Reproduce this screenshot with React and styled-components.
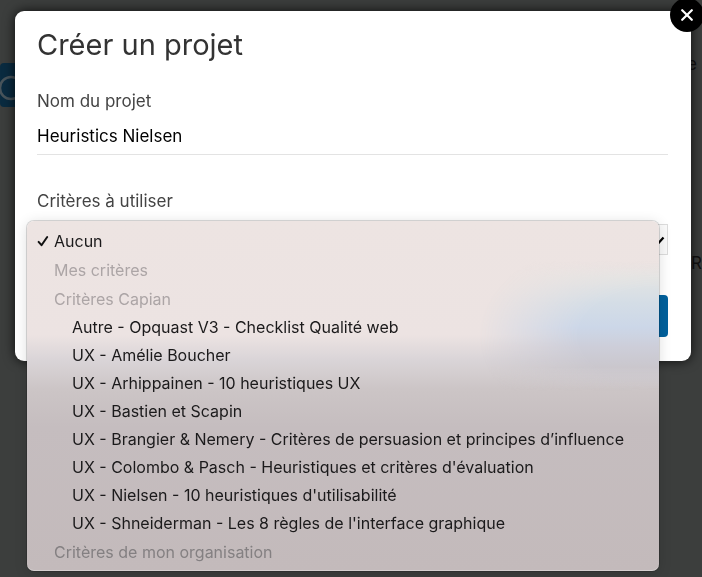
import React, { useState } from 'react';
import styled, { createGlobalStyle } from 'styled-components';

const GlobalStyle = createGlobalStyle`
  * {
    box-sizing: border-box;
  }

  body {
    margin: 0;
    background-color: #3c3e3d;
    font-family: Inter, "Liberation Sans", sans-serif;
    overflow: hidden;
  }
`;

const Page = styled.main`
  min-height: 100vh;
  display: flex;
  justify-content: space-between;
  align-items: flex-start;
  padding-top: 54px;
  font-size: 17px;
  line-height: 20px;
  color: #111111;
`;

const RecordButton = styled.button`
  width: 32px;
  height: 44px;
  margin-top: 9px;
  padding: 0;
  border: none;
  border-radius: 4px;
  background-color: #0a2b40;
  cursor: pointer;

  svg {
    display: block;
  }
`;

const SideNotes = styled.div`
  display: flex;
  flex-direction: column;
  align-items: flex-start;
  gap: 179px;
  width: 15px;
`;

const SideNote = styled.p`
  margin: 0;
  align-self: ${props => props.$align};
`;

const Overlay = styled.div`
  position: fixed;
  inset: 0;
  padding: 11px 11px 0 15px;
`;

const Dialog = styled.section`
  position: relative;
  padding: 16px 23px 24px 22px;
  border-radius: 9px;
  background-color: #ffffff;
  box-shadow: 0 0 12px rgba(0, 0, 0, 0.8);
`;

const DialogTitle = styled.h1`
  margin: 0 0 26px;
  font-size: 29px;
  font-weight: 400;
  line-height: 36px;
  color: #333333;
`;

const CloseButton = styled.button`
  position: absolute;
  top: -13px;
  right: -13px;
  width: 34px;
  height: 34px;
  display: flex;
  align-items: center;
  justify-content: center;
  padding: 0;
  border: none;
  border-radius: 50%;
  background-color: #000000;
  color: #ffffff;
  cursor: pointer;
`;

const Field = styled.div`
  display: flex;
  flex-direction: column;
  margin-bottom: ${props => props.$gap};
`;

const Label = styled.label`
  font-size: 17px;
  line-height: 24px;
  color: #444444;
`;

const TextInput = styled.input`
  width: 100%;
  height: 42px;
  padding: 4px 0 0;
  border: none;
  border-bottom: 1px solid #e3e3e3;
  outline: none;
  font-family: inherit;
  font-size: 17px;
  color: #000000;
`;

const SelectBox = styled.div`
  position: relative;
  margin-top: 11px;
`;

const Chevron = styled.svg`
  position: absolute;
  top: 12px;
  right: 3px;
  pointer-events: none;
`;

const Select = styled.select`
  display: block;
  width: 100%;
  height: 31px;
  padding: 0 24px 0 8px;
  appearance: none;
  border: 1px solid #dcdcdc;
  border-radius: 0;
  background-color: #fafafa;
  font-family: inherit;
  font-size: 16px;
`;

const SubmitButton = styled.button`
  display: block;
  height: 42px;
  margin-left: auto;
  padding: 0 24px;
  border: none;
  border-radius: 4px;
  background-color: #00609c;
  cursor: pointer;
`;

const Menu = styled.div`
  position: absolute;
  top: -3px;
  left: -10px;
  right: 9px;
  z-index: 1;
  padding: 6px 0 5px;
  border-radius: 7px;
  background: linear-gradient(#ede4e2 0, #ece3e2 114px, #dad5d8 138px, #ccc5c6 168px, #c5bdbf 206px, #c3babb 100%);
  box-shadow:
    0 0 0 1px rgba(0, 0, 0, 0.14),
    inset 0 -1px 0 rgba(255, 255, 255, 0.3),
    0 2px 14px rgba(0, 0, 0, 0.14);
  font-size: 16px;
  line-height: 28px;
  color: #1b1a1b;
  white-space: nowrap;

  /* the blue button showing through the frosted menu */
  &::before {
    content: '';
    position: absolute;
    z-index: -1;
    top: 40px;
    right: 0;
    width: 180px;
    height: 130px;
    background: linear-gradient(
      rgba(227, 228, 227, 0) 0,
      #e3e4e3 16px,
      #d4dde6 42px,
      #ccd7e8 66px,
      #cdced9 86px,
      #cac7cd 106px,
      rgba(202, 196, 198, 0) 100%
    );
    mask-image: radial-gradient(ellipse 180px 110px at 100% 75px, #000000 45%, transparent 100%);
  }
`;

const Option = styled.div`
  display: flex;
  align-items: center;
  height: 28px;
  padding-left: ${props => (props.$nested ? '45px' : '10px')};
  cursor: default;
`;

const CheckSlot = styled.span`
  display: flex;
  width: 17px;
`;

const Group = styled.div`
  padding-top: 1px;
`;

const GroupLabel = styled.div`
  height: 28px;
  padding-left: 27px;
  color: ${props => (props.$dim ? '#848082' : '#aca5a6')};
`;

const groups = [
  { label: 'Mes critères', options: [] },
  {
    label: 'Critères Capian',
    options: [
      'Autre - Opquast V3 - Checklist Qualité web',
      'UX - Amélie Boucher',
      'UX - Arhippainen - 10 heuristiques UX',
      'UX - Bastien et Scapin',
      'UX - Brangier & Nemery - Critères de persuasion et principes d’influence',
      "UX - Colombo & Pasch - Heuristiques et critères d'évaluation",
      "UX - Nielsen - 10 heuristiques d'utilisabilité",
      "UX - Shneiderman - Les 8 règles de l'interface graphique",
    ],
  },
  { label: 'Critères de mon organisation', options: [], dim: true },
];

const CriteriaMenu = ({ value, onSelect }) => (
  <Menu role="listbox" aria-label="Critères à utiliser">
    <Option role="option" aria-selected={value === 'Aucun'} onClick={() => onSelect('Aucun')}>
      <CheckSlot>
        {value === 'Aucun' && (
          <svg width="12" height="12" viewBox="0 0 12 12" fill="none">
            <path d="M1.6 6.9 L4.5 10.2 L10.2 2" stroke="#111111" strokeWidth="2" strokeLinecap="round" strokeLinejoin="round" />
          </svg>
        )}
      </CheckSlot>
      Aucun
    </Option>
    {groups.map(group => (
      <Group key={group.label} role="group" aria-label={group.label}>
        <GroupLabel $dim={group.dim}>{group.label}</GroupLabel>
        {group.options.map(option => (
          <Option key={option} $nested role="option" aria-selected={value === option} onClick={() => onSelect(option)}>
            {option}
          </Option>
        ))}
      </Group>
    ))}
  </Menu>
);

const App = () => {
  const [name, setName] = useState('Heuristics Nielsen');
  const [criteria, setCriteria] = useState('Aucun');

  return (
    <>
      <GlobalStyle />
      <Page>
        <RecordButton type="button" aria-label="Capture">
          <svg width="32" height="44" viewBox="0 0 32 44" fill="none">
            <circle cx="11" cy="25" r="11" stroke="#48545b" strokeWidth="2.5" />
          </svg>
        </RecordButton>
        <SideNotes>
          <SideNote $align="flex-start">e</SideNote>
          <SideNote $align="flex-end">R</SideNote>
        </SideNotes>
      </Page>

      <Overlay>
        <Dialog role="dialog" aria-labelledby="dialog-title">
          <CloseButton type="button" aria-label="Fermer">
            <svg width="12" height="12" viewBox="0 0 12 12" fill="none">
              <path d="M1.2 1.2 L10.8 10.8 M10.8 1.2 L1.2 10.8" stroke="currentColor" strokeWidth="2.2" strokeLinecap="round" />
            </svg>
          </CloseButton>

          <DialogTitle id="dialog-title">Créer un projet</DialogTitle>

          <Field $gap="34px">
            <Label htmlFor="project-name">Nom du projet</Label>
            <TextInput id="project-name" value={name} onChange={e => setName(e.target.value)} />
          </Field>

          <Field $gap="40px">
            <Label htmlFor="criteria">Critères à utiliser</Label>
            <SelectBox>
              <Select id="criteria" value={criteria} onChange={e => setCriteria(e.target.value)}>
                <option>Aucun</option>
                {groups.map(group => (
                  <optgroup key={group.label} label={group.label}>
                    {group.options.map(option => (
                      <option key={option}>{option}</option>
                    ))}
                  </optgroup>
                ))}
              </Select>
              <Chevron width="12" height="8" viewBox="0 0 12 8" fill="none">
                <path d="M1.5 1.5 L6 6.5 L10.5 1.5" stroke="#000000" strokeWidth="2.2" />
              </Chevron>
              <CriteriaMenu value={criteria} onSelect={setCriteria} />
            </SelectBox>
          </Field>

          <SubmitButton type="button" aria-label="Créer" />
        </Dialog>
      </Overlay>
    </>
  );
};

export default App;
